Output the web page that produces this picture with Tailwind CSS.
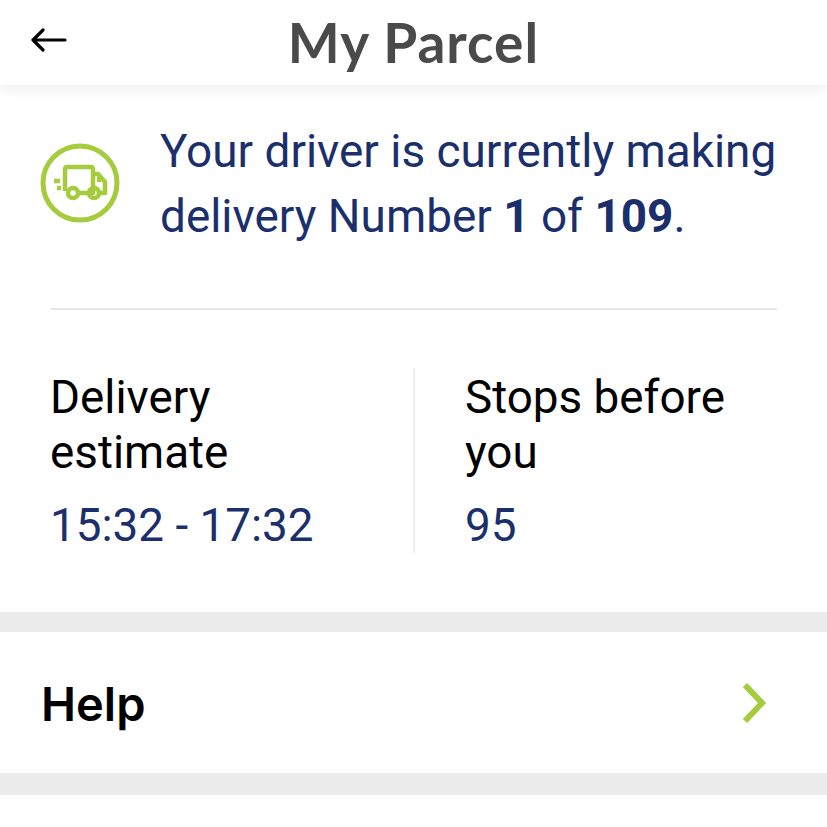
<!DOCTYPE html>
<html lang="en">
<head>
    <meta charset="UTF-8">
    <meta name="viewport" content="width=device-width, initial-scale=1.0">
    <script src="https://cdn.jsdelivr.net/npm/@tailwindcss/browser@4"></script>
    <title>My Parcel</title>
</head>

<body class="bg-white font-['Roboto',sans-serif] overflow-hidden">
    <header class="relative z-10 flex items-center justify-center h-[85px] bg-white shadow-[0_4px_12px_rgba(0,0,0,0.07)]">
        <button class="absolute left-[31px] top-[28px] w-[36px] h-[24px]" aria-label="back">
            <svg viewBox="0 0 36 24" class="w-[36px] h-[24px]" fill="none" stroke="#000" stroke-width="3.2" stroke-linecap="round" stroke-linejoin="round">
                <path d="M2 12H34M12 2L2 12L12 22"/>
            </svg>
        </button>
        <h1 class="font-['Lato',sans-serif] font-bold text-[55px] tracking-[1px] leading-none text-[#4a4a4a]">My Parcel</h1>
    </header>

    <main>
        <section class="flex items-start pt-[34px] pl-[40px] pr-[40px]">
            <svg viewBox="0 0 80 80" class="w-[80px] h-[80px] mt-[24px] shrink-0" fill="none" stroke="#a4cc3c">
                <circle cx="40" cy="40" r="37" stroke-width="5"/>
                <path d="M25 48V26a2 2 0 0 1 2-2h24a2 2 0 0 1 2 2v24H38M53 31h5l7 8v11h-4" stroke-width="4.5" stroke-linejoin="round"/>
                <circle cx="33" cy="50" r="5" stroke-width="4.5"/>
                <circle cx="54" cy="50" r="5" stroke-width="4.5"/>
                <path d="M14 38h6M17 45h4" stroke-width="4.5"/>
                <rect x="57" y="34" width="4" height="5" fill="#a4cc3c" stroke="none"/>
            </svg>
            <p class="ml-[40px] text-[45.9px] leading-[65px] text-[#1a2f6b] whitespace-nowrap">Your driver is currently making<br>delivery Number <b class="font-bold">1</b> of <b class="font-bold">109</b>.</p>
        </section>

        <div class="mx-[50px] mt-[59px] h-[2px] bg-[#e8e8e8]"></div>

        <section class="grid grid-cols-[365px_1fr] mt-[58px] ml-[50px] h-[185px]">
            <div class="border-r-2 border-[#eeeeee] pt-[2px]">
                <p class="text-[45.8px] leading-[55px] text-black">Delivery<br>estimate</p>
                <p class="mt-[18px] text-[45.8px] leading-[55px] text-[#1a2f6b]">15:32 - 17:32</p>
            </div>
            <div class="pl-[50px] pt-[2px]">
                <p class="text-[45.8px] leading-[55px] text-black">Stops before<br>you</p>
                <p class="mt-[18px] text-[45.8px] leading-[55px] text-[#1a2f6b]">95</p>
            </div>
        </section>

        <div class="mt-[59px] h-[20px] bg-[#ececec]"></div>

        <a class="flex items-center justify-between h-[141px] pl-[41px] pr-[61px]">
            <span class="font-['Inter',sans-serif] font-semibold text-[47px] text-black pt-[3px]">Help</span>
            <svg viewBox="0 0 24 40" class="w-[24px] h-[40px]" fill="none" stroke="#a4cc3c" stroke-width="6">
                <path d="M3 2L20 20L3 38"/>
            </svg>
        </a>

        <div class="h-[22px] bg-[#ececec]"></div>
    </main>
</body>

</html>
